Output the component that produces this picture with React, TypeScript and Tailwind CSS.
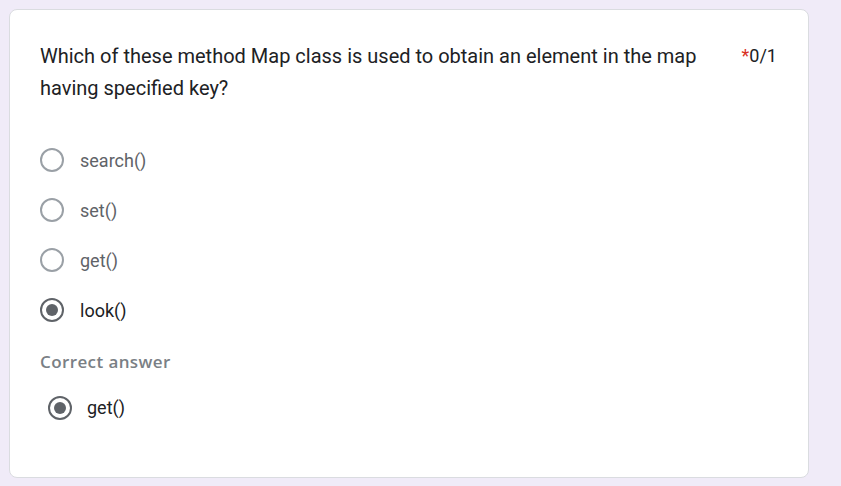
import React from "react";

const options = ["search()", "set()", "get()", "look()"];
const picked = "look()";

function Radio({ checked }: { checked: boolean }) {
  return (
    <span
      className={`w-[24px] h-[24px] rounded-full border-2 flex items-center justify-center shrink-0 ${
        checked ? "border-[#5f6368]" : "border-[#9aa0a6]"
      }`}
    >
      {checked && <span className="w-[12px] h-[12px] rounded-full bg-[#5f6368]" />}
    </span>
  );
}

export default function App() {
  return (
    <div className="w-[841px] h-[486px] bg-[#f0ebf8] pt-[9px] pl-[9px] font-['Roboto',sans-serif]">
      <div className="w-[800px] h-[469px] bg-white rounded-[8px] border border-[#dadce0] pl-[30px] pr-[30px] pt-[30px]">
        {/* Question header */}
        <div className="flex items-start justify-between">
          <p className="text-[20px] leading-[32px] text-[#202124] w-[680px]">
            Which of these method Map class is used to obtain an element in the map having specified key?
          </p>
          <span className="text-[18px] leading-[32px] text-[#202124] mr-[1px]">
            <span className="text-[#d93025]">*</span>0/1
          </span>
        </div>

        {/* Options */}
        <div className="mt-[44px] flex flex-col gap-[26px]">
          {options.map((o) => (
            <div key={o} className="flex items-center gap-[16px] h-[24px]">
              <Radio checked={o === picked} />
              <span
                className={`text-[18px] ${o === picked ? "text-[#202124]" : "text-[#5f6368]"}`}
              >
                {o}
              </span>
            </div>
          ))}
        </div>

        {/* Correct answer */}
        <p className="mt-[27px] text-[17px] font-semibold tracking-[0.4px] text-[#7a7f85] font-['Open_Sans',sans-serif]">
          Correct answer
        </p>
        <div className="mt-[21px] ml-[8px] flex items-center gap-[15px] h-[24px]">
          <Radio checked />
          <span className="text-[18px] text-[#202124]">get()</span>
        </div>
      </div>
    </div>
  );
}
